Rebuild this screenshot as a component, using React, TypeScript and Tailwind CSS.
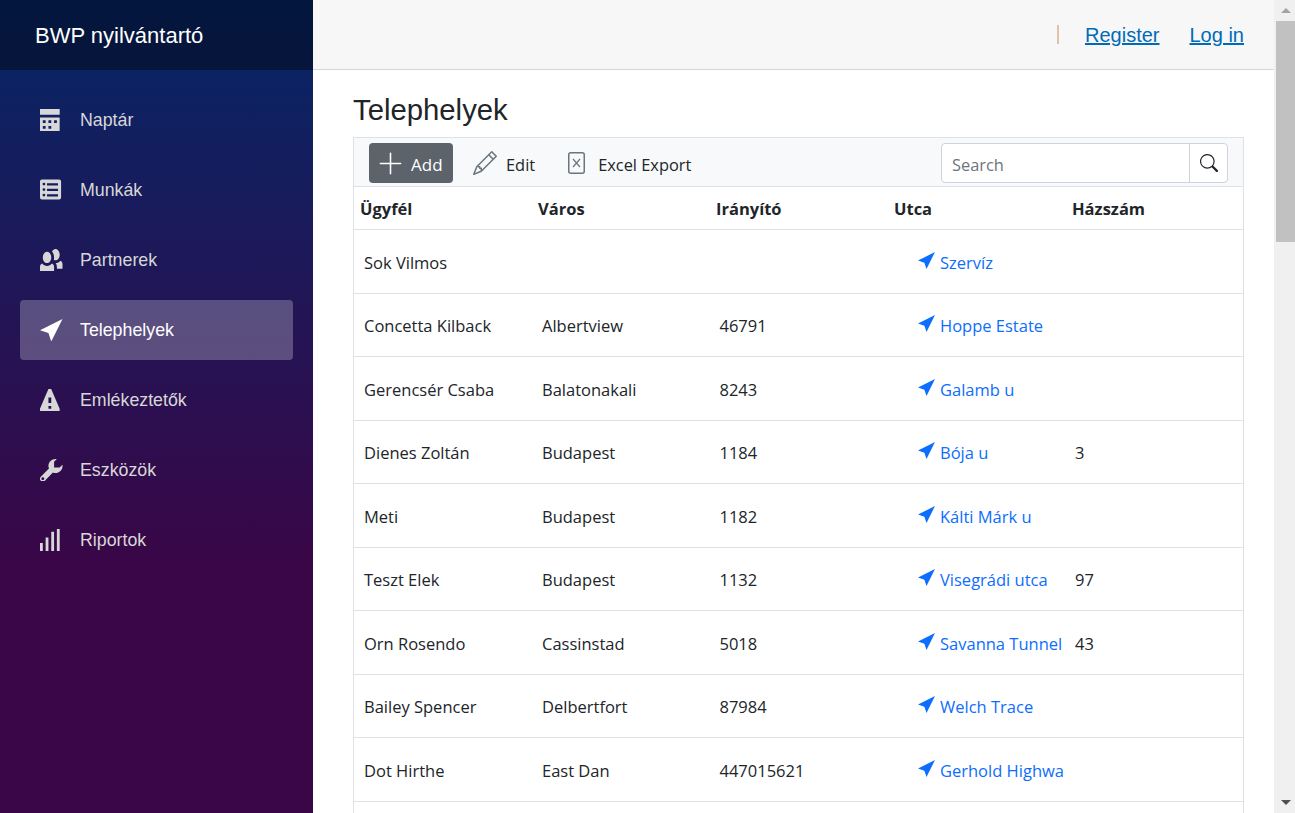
import { ReactNode } from "react";

const navItems: { label: string; path: string; active?: boolean }[] = [
  {
    label: "Naptár",
    path: "M0 0v2h7v-2h-7zm0 3v4.91c0 .05.04.09.09.09h6.81c.05 0 .09-.04.09-.09v-4.91h-7zm1 1h1v1h-1v-1zm2 0h1v1h-1v-1zm2 0h1v1h-1v-1zm-4 2h1v1h-1v-1zm2 0h1v1h-1v-1z",
  },
  {
    label: "Munkák",
    path: "M.7 .2h6.1c.4 0 .7.3.7.7v5.7c0 .4-.3.7-.7.7h-6.1c-.4 0-.7-.3-.7-.7v-5.7c0-.4.3-.7.7-.7zm.7 1.1a.5.5 0 1 0 0 1 .5.5 0 0 0 0-1zm0 1.95a.5.5 0 1 0 0 1 .5.5 0 0 0 0-1zm0 1.95a.5.5 0 1 0 0 1 .5.5 0 0 0 0-1zm1.1-3.65v.8h3.9v-.8h-3.9zm0 1.95v.8h3.9v-.8h-3.9zm0 1.95v.8h3.9v-.8h-3.9z",
  },
  {
    label: "Partnerek",
    path: "M5.5 0c-.51 0-.95.35-1.22.88.45.54.72 1.28.72 2.13 0 .29-.03.55-.09.81.19.11.38.19.59.19.83 0 1.5-.9 1.5-2s-.67-2-1.5-2zm-3 1c-.83 0-1.5.9-1.5 2s.67 2 1.5 2 1.5-.9 1.5-2-.67-2-1.5-2zm4.75 3.16c-.43.51-1.02.82-1.69.84.27.38.44.84.44 1.34v.66h2v-1.66c0-.52-.31-.97-.75-1.19zm-6.5 1c-.44.22-.75.67-.75 1.19v1.66h5v-1.66c0-.52-.31-.97-.75-1.19-.45.53-1.06.84-1.75.84s-1.3-.32-1.75-.84z",
  },
  { label: "Telephelyek", path: "M8 0l-8 4 3 1 1 3 4-8z", active: true },
  {
    label: "Emlékeztetők",
    path: "M3.09 0c-.06 0-.1.04-.13.09l-2.94 6.81c-.02.05-.03.13-.03.19v.81c0 .05.04.09.09.09h6.81c.05 0 .09-.04.09-.09v-.81c0-.05-.01-.14-.03-.19l-2.94-6.81c-.02-.05-.07-.09-.13-.09h-.81zm-.09 3h1v2h-1v-2zm0 3h1v1h-1v-1z",
  },
  {
    label: "Eszközök",
    path: "M5.5 0c-1.38 0-2.5 1.12-2.5 2.5 0 .32.08.62.19.91l-2.91 2.88c-.39.39-.39 1.05 0 1.44.2.2.46.28.72.28.26 0 .52-.09.72-.28l2.88-2.91c.28.11.58.19.91.19 1.38 0 2.5-1.12 2.5-2.5 0-.16 0-.32-.03-.47l-.97.97h-2v-2l.97-.97c-.15-.03-.31-.03-.47-.03zm-4.5 6.5c.28 0 .5.22.5.5s-.22.5-.5.5-.5-.22-.5-.5.22-.5.5-.5z",
  },
  {
    label: "Riportok",
    path: "M6 0v8h1v-8h-1zm-2 1v7h1v-7h-1zm-2 2v5h1v-5h-1zm-2 2v3h1v-3h-1z",
  },
];

const rows = [
  ["Sok Vilmos", "", "", "Szervíz", ""],
  ["Concetta Kilback", "Albertview", "46791", "Hoppe Estate", ""],
  ["Gerencsér Csaba", "Balatonakali", "8243", "Galamb u", ""],
  ["Dienes Zoltán", "Budapest", "1184", "Bója u", "3"],
  ["Meti", "Budapest", "1182", "Kálti Márk u", ""],
  ["Teszt Elek", "Budapest", "1132", "Visegrádi utca", "97"],
  ["Orn Rosendo", "Cassinstad", "5018", "Savanna Tunnel", "43"],
  ["Bailey Spencer", "Delbertfort", "87984", "Welch Trace", ""],
  ["Dot Hirthe", "East Dan", "447015621", "Gerhold Highwa", ""],
  ["", "", "", "", ""],
];

const Toolbtn = ({ children, label, gap }: { children: ReactNode; label: string; gap: string }) => (
  <button className={`flex h-10 items-center px-2.5 text-[#212529] ${gap}`}>
    {children}
    <span className="pt-1">{label}</span>
  </button>
);

const App = () => {
  return (
    <div className="flex h-[813px] overflow-hidden bg-white font-['Liberation_Sans',sans-serif]">
      <aside className="flex w-[313px] shrink-0 flex-col bg-[linear-gradient(180deg,#052767_0%,#3a0647_70%)]">
        <div className="flex h-[70px] items-center bg-black/40 pl-[35px] text-[22px] text-white">
          BWP nyilvántartó
        </div>
        <nav className="flex flex-col gap-2.5 px-5 pt-5">
          {navItems.map((item) => (
            <a
              key={item.label}
              className={`flex h-[60px] items-center rounded pl-5 text-[17.8px] ${
                item.active ? "bg-white/25 text-white" : "text-[#d7d7d7]"
              }`}
            >
              <svg viewBox="0 0 8 8" className="h-[22.5px] w-[22.5px] shrink-0 fill-current">
                <path d={item.path} />
              </svg>
              <span className="ml-[17.5px]">{item.label}</span>
            </a>
          ))}
        </nav>
      </aside>

      <main className="flex min-w-0 flex-1 flex-col">
        <header className="flex h-[70px] shrink-0 items-center justify-end border-b border-[#d6d5d5] bg-[#f7f7f7] pr-[30px] text-[20px]">
          <span className="mr-[26px] h-[19px] w-0.5 bg-[#dcc5a5]" />
          <a className="text-[#006bb7] underline">Register</a>
          <a className="ml-[30px] text-[#006bb7] underline">Log in</a>
        </header>

        <div className="pl-10 pr-[30px]">
          <h1 className="mt-[23px] mb-2.5 text-[29.3px] leading-[34px] text-[#212529]">Telephelyek</h1>

          <div className="border border-[#dee2e6] font-['Open_Sans',sans-serif] text-[16.5px] text-[#212529]">
            <div className="flex h-[49px] items-start border-b border-[#dee2e6] bg-[#f8f9fa] px-[15px] pt-[5px] text-[16.4px]">
              <button className="flex h-10 w-[84px] items-center gap-[8.5px] rounded bg-[#5c636a] pl-[8.5px] text-white">
                <svg viewBox="0 0 16 16" className="h-[25px] w-[25px] fill-current">
                  <path d="M8 1a.5.5 0 0 1 .5.5v6h6a.5.5 0 0 1 0 1h-6v6a.5.5 0 0 1-1 0v-6h-6a.5.5 0 0 1 0-1h6v-6A.5.5 0 0 1 8 1z" />
                </svg>
                <span className="pt-1 text-[17px]">Add</span>
              </button>
              <div className="ml-2.5 flex items-center">
                <Toolbtn label="Edit" gap="gap-[9px]">
                  <svg viewBox="0 0 16 16" className="h-6 w-6 fill-[#6c757d]">
                    <path d="M12.146.146a.5.5 0 0 1 .708 0l3 3a.5.5 0 0 1 0 .708l-10 10a.5.5 0 0 1-.168.11l-5 2a.5.5 0 0 1-.65-.65l2-5a.5.5 0 0 1 .11-.168l10-10zM11.207 2.5 13.5 4.793 14.793 3.5 12.5 1.207 11.207 2.5zm1.586 3L10.5 3.207 4 9.707V10h.5a.5.5 0 0 1 .5.5v.5h.5a.5.5 0 0 1 .5.5v.5h.293l6.5-6.5zm-9.761 5.175-.106.106-1.528 3.821 3.821-1.528.106-.106A.5.5 0 0 1 5 12.5V12h-.5a.5.5 0 0 1-.5-.5V11h-.5a.5.5 0 0 1-.468-.325z" />
                  </svg>
                </Toolbtn>
                <div className="ml-[13px]">
                  <Toolbtn label="Excel Export" gap="gap-[13px]">
                    <svg viewBox="0 0 17 22" className="h-[22px] w-[17px] fill-none stroke-[#6c757d]">
                      <rect x="0.75" y="0.75" width="15.5" height="20.5" rx="2" strokeWidth="1.5" />
                      <path d="M5 7l7 8M12 7l-7 8" strokeWidth="1.2" />
                    </svg>
                  </Toolbtn>
                </div>
              </div>
              <div className="ml-auto flex h-10 w-[287px] rounded border border-[#ced4da] bg-white">
                <div className="flex flex-1 items-center pt-1 pl-2.5 text-[#6c757d]">Search</div>
                <div className="flex w-[38px] items-center justify-center border-l border-[#ced4da]">
                  <svg viewBox="0 0 16 16" className="h-[18px] w-[18px] fill-[#212529]">
                    <path d="M11.742 10.344a6.5 6.5 0 1 0-1.397 1.398h-.001c.03.04.062.078.098.115l3.85 3.85a1 1 0 0 0 1.415-1.414l-3.85-3.85a1.007 1.007 0 0 0-.115-.1zM12 6.5a5.5 5.5 0 1 1-11 0 5.5 5.5 0 0 1 11 0z" />
                  </svg>
                </div>
              </div>
            </div>

            <table className="w-full table-fixed border-collapse">
              <colgroup>
                <col className="w-[178px]" />
                <col className="w-[178px]" />
                <col className="w-[178px]" />
                <col className="w-[178px]" />
                <col />
              </colgroup>
              <thead>
                <tr className="h-[42.5px] border-b border-[#dee2e6]">
                  {["Ügyfél", "Város", "Irányító", "Utca", "Házszám"].map((h) => (
                    <th key={h} className="px-1.5 pt-0.5 text-left font-bold">
                      {h}
                    </th>
                  ))}
                </tr>
              </thead>
              <tbody>
                {rows.map((row, i) => (
                  <tr key={i} className="h-[63.5px] border-b border-[#dee2e6]">
                    <td className="pt-1 pl-2.5 whitespace-nowrap">{row[0]}</td>
                    <td className="pt-1 pl-2.5 whitespace-nowrap">{row[1]}</td>
                    <td className="pt-1 pl-[9.5px] whitespace-nowrap">{row[2]}</td>
                    <td className="pt-1 pl-[30px] whitespace-nowrap">
                      {row[3] && (
                        <a className="flex items-center text-[#0d6efd]">
                          <svg viewBox="0 0 8 8" className="mr-[5px] mb-1.5 h-[17px] w-[17px] shrink-0 fill-current">
                            <path d="M8 0l-8 4 3 1 1 3 4-8z" />
                          </svg>
                          {row[3]}
                        </a>
                      )}
                    </td>
                    <td className="pt-1 pl-[9px] whitespace-nowrap">{row[4]}</td>
                  </tr>
                ))}
              </tbody>
            </table>
          </div>
        </div>
      </main>

      {/* scrollbar */}
      <div className="flex h-full w-[21px] shrink-0 flex-col bg-[#f0f0f0] pl-0.5">
        <div className="flex h-[21px] items-center justify-center">
          <div className="h-0 w-0 border-x-[5px] border-b-[5px] border-x-transparent border-b-[#a3a3a3]" />
        </div>
        <div className="h-[221px] bg-[#c1c1c1]" />
        <div className="flex-1" />
        <div className="flex h-[21px] items-center justify-center">
          <div className="h-0 w-0 border-x-[5px] border-t-[5px] border-x-transparent border-t-[#505050]" />
        </div>
      </div>
    </div>
  );
};

export default App;
